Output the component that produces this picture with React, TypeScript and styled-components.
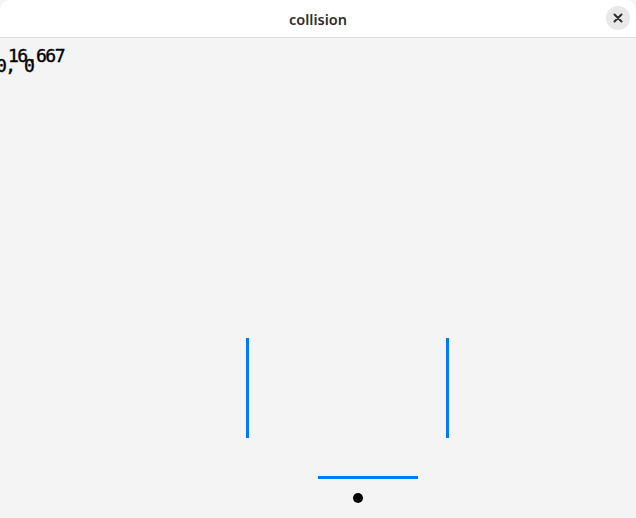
import React from "react";
import styled, { createGlobalStyle } from "styled-components";

const Global = createGlobalStyle`
  html, body { margin: 0; padding: 0; background: #f4f4f4; }
  body { width: 636px; height: 518px; overflow: hidden; }
`;

const Window = styled.div`
  width: 636px;
  height: 518px;
  display: flex;
  flex-direction: column;
  background: #f4f4f4;
  overflow: hidden;
`;

const TitleBar = styled.header`
  height: 37px;
  flex: none;
  background: #ffffff;
  border-bottom: 1px solid #dcdcdc;
  border-radius: 10px 10px 0 0;
  display: flex;
  align-items: center;
  justify-content: center;
  position: relative;
`;

const Title = styled.h1`
  margin: 0;
  font-family: "Noto Sans", "DejaVu Sans", sans-serif;
  font-size: 14.5px;
  font-weight: 600;
  color: #2e2e2e;
`;

const CloseButton = styled.button`
  position: absolute;
  right: 6px;
  top: 6px;
  width: 24px;
  height: 24px;
  border-radius: 50%;
  border: none;
  background: #e8e8e8;
  padding: 0;
  display: flex;
  align-items: center;
  justify-content: center;
`;

const Canvas = styled.main`
  flex: 1;
  position: relative;
`;

const Debug = styled.div<{ $left: number; $top: number }>`
  position: absolute;
  left: ${(p) => p.$left}px;
  top: ${(p) => p.$top}px;
  font-family: "DejaVu Sans Mono", "Liberation Mono", monospace;
  font-size: 18px;
  font-weight: 400;
  letter-spacing: -1.5px;
  line-height: 1;
  color: #000;
  white-space: pre;
  -webkit-text-stroke: 0.4px #000;
`;

const Scene = styled.svg`
  position: absolute;
  left: 0;
  top: 0;
`;

export default function App() {
  return (
    <Window>
      <Global />
      <TitleBar>
        <Title>collision</Title>
        <CloseButton aria-label="close">
          <svg width="10" height="10" viewBox="0 0 10 10">
            <path d="M1.5 1.5 L8.5 8.5 M8.5 1.5 L1.5 8.5" stroke="#2e2e2e" strokeWidth="2" strokeLinecap="round" />
          </svg>
        </CloseButton>
      </TitleBar>
      <Canvas>
        <Scene width="636" height="480" viewBox="0 38 636 480">
          <rect x="246" y="338" width="3" height="100" fill="#007AFF" />
          <rect x="446" y="338" width="3" height="100" fill="#007AFF" />
          <rect x="318" y="476" width="100" height="3" fill="#007AFF" />
          <circle cx="358" cy="498" r="5" fill="#000" />
        </Scene>
        <Debug $left={-4} $top={19}>0, 0</Debug>
        <Debug $left={8} $top={9}>16.667</Debug>
      </Canvas>
    </Window>
  );
}
